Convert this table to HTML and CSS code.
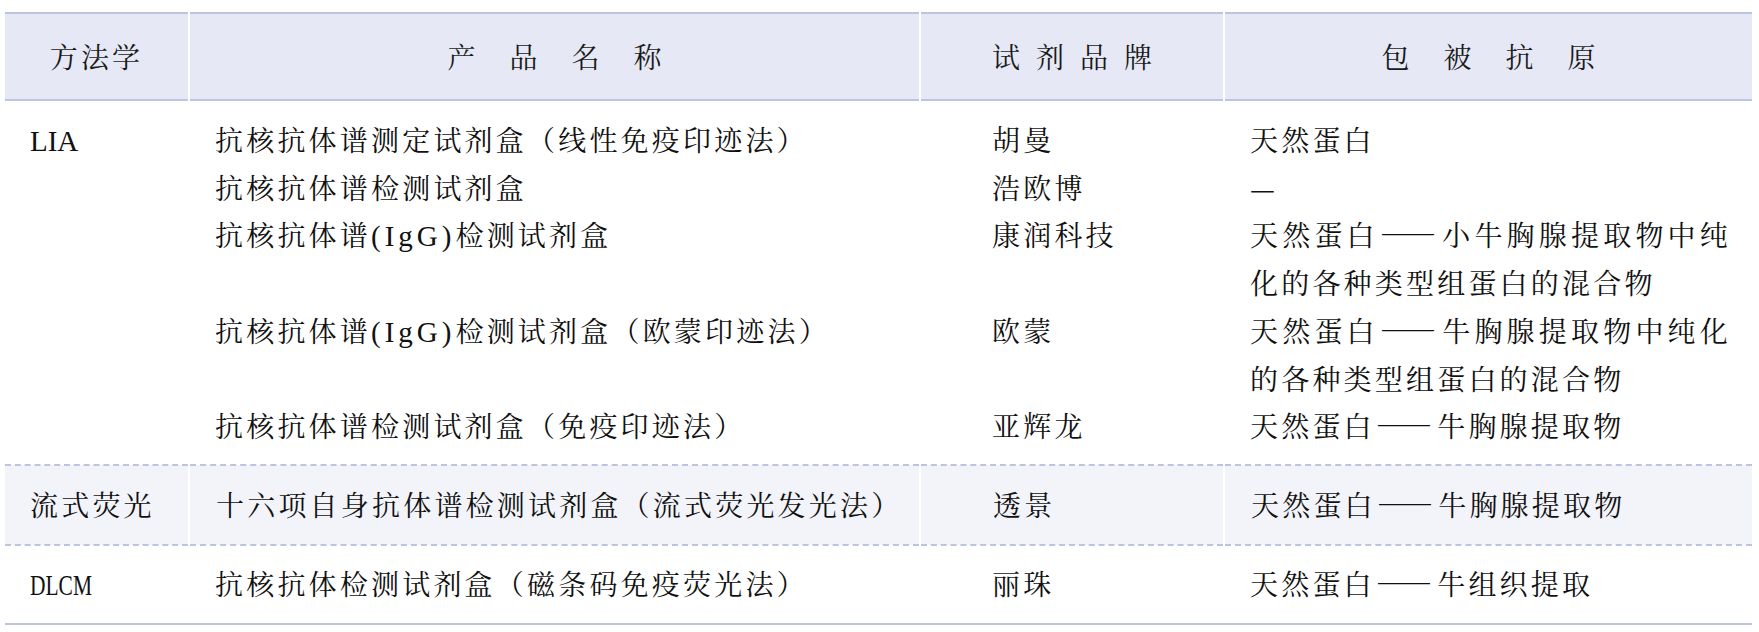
FILE: index.html
```html
<!DOCTYPE html>
<html lang="zh-CN">
<head>
<meta charset="utf-8">
<title>抗核抗体谱检测试剂</title>
<link rel="stylesheet" href="styles.css">
</head>
<body>
<table class="t">
  <colgroup>
    <col class="w1"><col class="w2"><col class="w3"><col class="w4">
  </colgroup>
  <thead>
    <tr>
      <th>方法学</th>
      <th><span class="wide">产品名称</span></th>
      <th><span class="mid">试剂品牌</span></th>
      <th><span class="wide">包被抗原</span></th>
    </tr>
  </thead>
  <tbody class="g g1">
    <tr class="first">
      <td class="m" rowspan="5"><span class="lat">LIA</span></td>
      <td class="p">抗核抗体谱测定试剂盒（线性免疫印迹法）</td>
      <td class="b">胡曼</td>
      <td class="a">天然蛋白</td>
    </tr>
    <tr>
      <td class="p">抗核抗体谱检测试剂盒</td>
      <td class="b">浩欧博</td>
      <td class="a">—</td>
    </tr>
    <tr>
      <td class="p">抗核抗体谱<span class="lat paren">(IgG)</span>检测试剂盒</td>
      <td class="b">康润科技</td>
      <td class="a">天然蛋白<span class="dash">——</span>小牛胸腺提取物中纯化的各种类型组蛋白的混合物</td>
    </tr>
    <tr>
      <td class="p">抗核抗体谱<span class="lat paren">(IgG)</span>检测试剂盒（欧蒙印迹法）</td>
      <td class="b">欧蒙</td>
      <td class="a">天然蛋白<span class="dash">——</span>牛胸腺提取物中纯化的各种类型组蛋白的混合物</td>
    </tr>
    <tr class="last">
      <td class="p">抗核抗体谱检测试剂盒（免疫印迹法）</td>
      <td class="b">亚辉龙</td>
      <td class="a">天然蛋白<span class="dash">——</span>牛胸腺提取物</td>
    </tr>
  </tbody>
  <tbody class="g g2">
    <tr class="first last">
      <td class="m">流式荧光</td>
      <td class="p">十六项自身抗体谱检测试剂盒（流式荧光发光法）</td>
      <td class="b">透景</td>
      <td class="a">天然蛋白<span class="dash">——</span>牛胸腺提取物</td>
    </tr>
  </tbody>
  <tbody class="g g3">
    <tr class="first last">
      <td class="m"><span class="lat narrow">DLCM</span></td>
      <td class="p">抗核抗体检测试剂盒（磁条码免疫荧光法）</td>
      <td class="b">丽珠</td>
      <td class="a">天然蛋白<span class="dash">——</span>牛组织提取</td>
    </tr>
  </tbody>
</table>
</body>
</html>
```

FILE: styles.css
```css
html, body {
  margin: 0;
  padding: 0;
  background: #ffffff;
}

body {
  font-family: "Noto Serif CJK SC", "Noto Sans CJK SC", sans-serif;
  color: #111111;
}

.t {
  margin: 12px 0 0 5px;
  width: 1747px;
  table-layout: fixed;
  border-collapse: collapse;
  font-size: 28px;
  letter-spacing: 3.2px;
}

.w1 { width: 184px; }
.w2 { width: 731px; }
.w3 { width: 304px; }
.w4 { width: 528px; }

.t thead tr {
  background: #e6e9f5;
  border-top: 2px solid #bcc4df;
  border-bottom: 2px solid #bcc4df;
}

.t th {
  font-weight: normal;
  text-align: center;
  line-height: 48px;
  padding: 18px 0 19px;
  color: #1a1a1a;
}

.t th + th,
.g2 td + td {
  border-left: 2px solid #ffffff;
}

.wide {
  letter-spacing: 34px;
  margin-right: -34px;
}

.mid {
  letter-spacing: 16px;
  margin-right: -16px;
}

.t td {
  line-height: 47.7px;
  padding: 0;
  vertical-align: top;
  text-align: left;
}

.g1 tr.first td { padding-top: 15px; }
.g1 tr.last td { padding-bottom: 14px; }

.g2 {
  background: #f3f4fa;
  border-top: 2px dashed #bcc4df;
  border-bottom: 2px dashed #bcc4df;
}
.g2 td { padding-top: 15px; padding-bottom: 15px; }

.g3 { border-bottom: 2px solid #bcc4df; }
.g3 td { padding-top: 14px; padding-bottom: 14px; }

.t td.m { padding-left: 25px; white-space: nowrap; }
.t td.p { padding-left: 26px; white-space: nowrap; }
.t td.b { padding-left: 72px; white-space: nowrap; }
.t td.a {
  padding-left: 26px;
  padding-right: 21px;
  text-align: justify;
}

.dash {
  letter-spacing: 0;
  margin-left: 1.2px;
  padding-right: 5.2px;
}

.lat {
  font-family: "Liberation Serif", serif;
  font-size: 29px;
  letter-spacing: 0;
}

.lat.paren {
  letter-spacing: 4px;
}

.lat.narrow {
  display: inline-block;
  transform: scaleX(0.74);
  transform-origin: left center;
}
```
